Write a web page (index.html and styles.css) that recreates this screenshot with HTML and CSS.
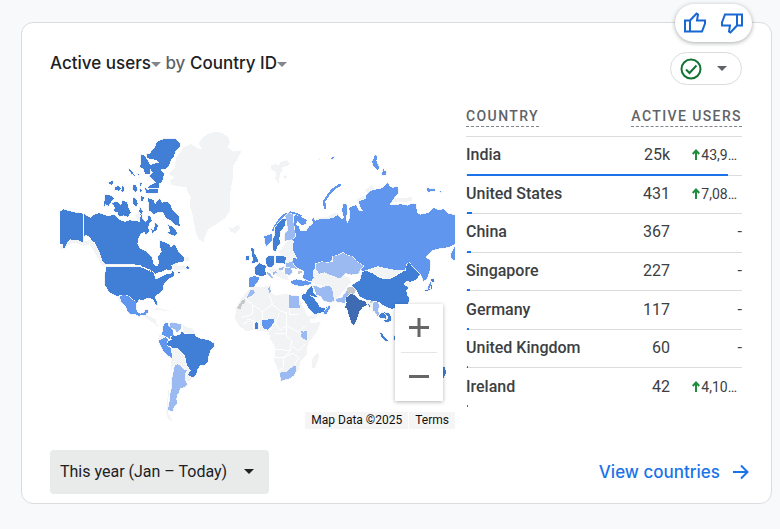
FILE: index.html
```html
<!DOCTYPE html>
<html lang="en">
<head>
<meta charset="utf-8">
<meta name="viewport" content="width=device-width, initial-scale=1">
<title>Active users by Country ID</title>
<link rel="stylesheet" href="styles.css">
</head>
<body>
<main class="card">
  <div class="feedback">
    <button type="button" aria-label="Helpful"><svg width="24" height="24" viewBox="0 0 24 24"><path d="M2 9.500h5v11H2zM7 9.500 13.500 2.500l1.500 1-1 6H22v3l-3 8H7"/></svg></button>
    <button type="button" aria-label="Not helpful"><svg class="down" width="24" height="24" viewBox="0 0 24 24"><path d="M2 9.500h5v11H2zM7 9.500 13.500 2.500l1.500 1-1 6H22v3l-3 8H7"/></svg></button>
  </div>
  <header class="head">
    <h2 class="title"><button type="button">Active users<i class="caret"></i></button> <span>by</span> <button type="button">Country ID<i class="caret"></i></button></h2>
    <button type="button" class="status" aria-label="Data quality">
      <svg width="22" height="22" viewBox="0 0 22 22"><circle cx="11" cy="11" r="9.500"/><path d="m6 11.500 3.500 3.500 7-7.500"/></svg>
      <i class="caret"></i>
    </button>
  </header>
  <div class="body">
    <div class="map">
      <svg class="world" viewBox="60 120 395 310" role="img" aria-label="World map of active users">
        <g transform="translate(150 120) scale(.33333)" class="none">
          <path d="M205 38l15 6 15 12 5 14-8 14 18 14 25-4-13 28-12 18-2 40-8 45v50l-15 23-30 20-20 12-10 20-5 20-15-10-10-30-7-40-8-30 2-25-14-30-43-7-5-13 12-10-17-10 20-20 3-30 17-20 5-10 25-10 15 13 18 2-13-15 13-20 22-13zM238 325l10 2 17-9 6 11-16 14-15-5zM363 139l14-4 10 6 3-12 20-5 10 8-8 10-16 1 2 12-8 10-4 28-10-14 2-20-14-8zM400 172l8-4 3 8-6 4zM386 400l30-40 20-4 10 26-4 35-28 15z"/>
        </g>
        <g transform="translate(40 120) scale(.33333)">
          <path class="shore" d="M62 388l20-14 20-10 28 10 22-5 22 36 18 34M410 435l-10 15 30-5 15 3M290 285l10 20M440 415l3 12"/>
          <path class="high" d="M60 278l10-7 10 3 20 6 29 4v86l-9-4-5-4-13 2-10-3-10 8-5 12-4 7-5-3 3-8-11-3z"/>
          <path class="high" d="M132 285l8 5 12 7 8-8 8-4 10-2 14 4 12 5 16-4 8 3 6 8 12 7 10 3 12-5 20 2 12 4 2-20-6-12 7-5 4 7v20l10 8 8-8-2-10 8 2 4 14-8 8-3 12 4 12-10 8-6-8-10 6-6 12-4 18 9 16 17 7 18 18 5 22 10 6 6-12-3-18 12-15-7-16 1-18 17 8 10 3 4 10 12-8 6 9 7 14 17 17-3 10-18 4-18 8 3 10-10 5-8-4-8 6-20 5-19 13-5-12-16-14-28-12H198l-10-8-10-30-6-12-7-15-11-8-5-10-12-6-5 6z"/>
          <path class="high" d="M352 68l20-8h35l15 15-3 8-13 14-4 14-10 12-4 14-10 12-18 3 12 12-5 22-9 8-2 12-31 2 1-6 12-6 10-6-12-10-7-10 9-10-8-12 5-12 24-6-12-8-13-1-12-4-2-14 10 3 5-10 8-8zM303 108l10 2 10 14 10 18-4 22h-14l-5-16-10-4 3-14zM315 206l6 6 32-3v12l-15 2-20-2zM300 192l5 1-3 10zM280 198l9 2 2 14-5 5-7-6zM300 206l6 10-5 2zM325 238l6 2 10 4 4 14 6-12 8-6 8 11 14-2 10 8 4 12 12 15 10 10 2 27-14-5-12-12-14-6-10-18-16-2-10 8-16-12zM384 318l10 4 12 10 5 12-8 6-20-8 8-6zM192 265l3-37 20 2 7 10-8 8-8 12-10-4zM216 252l14-4 12 12 6-15 14 6 2 12 8 18-8 12-14-4-14 3-2-12-14-4 6-10zM208 196l-3-5 12-5 4 3-6 8zM224 205l10-4 8 8-5 6-12-2zM248 198l6 15-8 6-2-5zM264 148l12 8 8 14-10-6zM292 165l6 1v6zM280 236l8 4 6 14-6 8-8-8zM304 232l8 2-2 10-8 2zM300 265l8 12-4 8-6-8zM345 312l9 6-4 14-8 6zM334 330l8 4-4 10zM440 441l9 3-3 5-8-1z"/>
        </g>
        <g transform="translate(40 250) scale(.33333)">
          <path class="none" d="M222 133l15 5 4 22-10-16zM312 197l16 3 20 12 1 14 14 6-12-1-20-16-22-12zM330 180l30-3 35 12-36-6zM428 228l14 7 18 5 3 14-34-4zM356 258l12-3 12 12-15 8-10 3zM398 300l16 1 20 18 6 20 14 20-4 14 10 12-14 12-6-12 2-24-22-12-22 2-6 20-6 60-2 60 6 10 8 16-13-6-6-20 4-50 8-60 4-60zM440 378l15 8-8 12-10-4z"/>
          <path class="border" d="M200 50h100l6 4 28 11 10 10 4 15 27-16 20-3 6-10"/>
          <path class="high" d="M200 53h98l10 4 25 12 10 10 4 14 28-16 18-2 4-8 5 4-2 12-12 4-8 10-8 8-4 8 2 8-10 10-12 8-4 6 5 10 3 13-4-1-6-10-4-8-18-2-10 6-12-2-6 8-4 4-6-4-6-10-10-4-14-4-15 2-20-8-12-8-4-10-6-8v-32zM414 69l6 1-2 4z"/>
          <path class="mid" d="M238 140l17-1 10 3 10 9 12 6 2 20 1 12 10 5 11-2 6-10h9l-2 9-7 3 2 6-10-3-12 4-14-6-12 1-8-10-6-14-12-12zM376 221l7 0 3 12 11 8 4 20-8 2-4 7-12-9-12-4 3-10v-12zM368 269l8-4 8 8-3 12 4 8 9 5 1 28-14-8-12-14-12-24 1-6z"/>
          <path class="low" d="M388 224l12-3 24 6-1 12-11 12-6-8-5-4-10-3zM404 350l8-4 10 4 10 12 9 1-5 10v22l6 12-8 8-14 2-4 14-5 8-2 10 2 16-9 8-4 14-14-4 6-30 2-26 4-12-1-22 5-20z"/>
          <path class="high" d="M400 262l20-4 5-11 8 9 30-2 4 9 14 6 24 4 16 10 1 9-12 14-5 16-2 15-8 11-14 1-10 12-2 15-11 9-15-8 9-12-8-12-6-14-2-18-18-17-6-6-14-1-8-6-8-2 1-12 12-4-2-10z"/>
        </g>
        <g transform="translate(220 230) scale(.33333)">
          <path class="none" d="M78 190l20-15 25-2 24-1 5 20 18 8 20-5 45 5 8 20 20 42 12 22 28-6-16 36-24 30-2 34-18 16-8 30-26 28-24 4-7-24-15-35 2-45-14-20-4-22-24-5-24-2-22 4-20-18-12-20 4-34 15-27zM294 370l4 10-12 35-8 3-4-8 4-22zM195 60l35 10-5 30-30-5zM145 120l25 0 30 15 8 20-20-5-30-15zM278 130l22-22 50 26 38 12 5 14-30 35-20 25-35-50-35-10zM262 262l20-4 28-12-28 24-15 2z"/>
          <path class="border" d="M75 208l22 18v30l-30 10M97 226l30 22 30-22-10-32M127 248v24M157 226l25 20 18 5v40l-20 12-14-20 12-30M208 198v58l30 0M200 290l35 20 20-20M165 315l30 0 20 20-5 30-45-5M200 291l0 25M210 365l-20 22h-28M190 387v28l-14 12M215 350l20 15 20-20M190 387l28-15 18 14-12 20M80 270l22 5 0 28M118 274v28M68 285l20-10M148 305l15-22"/>
          <path class="dis" d="M75 210l-10 5-14 23 12 2 2-12 10-6zM232 128l14-2 0 6-12 4z"/>
          <path class="low" d="M80 206l12-24 11 3 1 8-16 12zM145 176l5-4 2 14-2 9-4-8zM208 198l14 4 14 0 0 16 5 18h-33zM242 304l8 4 12-2 0 14-3 15-16-11 2-10zM180 431l10-3 12 0 12-12 12-8 3 18-8 14-16 10-12 2-10 3zM194 118l18-2 6 14-8 8-14-4zM198 103l28-8 36 8-2 10-14 8-20-2-28-6zM158 130l10-4 2 5-10 6zM142 130l6 2 12 14-4 1-14-12zM176 118l16-4-4 8-12 2zM280 172l8-2 12 8 22-8 12 4 4 14 4 26-8 6-20-4-14-16-10-2zM348 210l18-4 18-26 6 12-12 16-4 14-24-4z"/>
          <path class="mid" d="M88 146l14-5 16 5-6 14-12 14-12 0zM214 156l14-5 20 4 24-2 1 12-16 4-18 2-24-6zM127 274l14-2 20-3 1 10-8 12-11 11-12-3-4-10zM312 244l10-6 6-10 2 8-10 18-8 2z"/>
          <path class="high" d="M105 114l14-12 8 6 12 2-4 12 3 14-12 6-20-6zM138 89l8-9 16 1 1 22-8 12-12-2-4-10zM168 82l14-2 15 4-1 20-28-3zM94 58l8 1 0 14 10 14 2 12-20 4 6-12-5-16zM79 82l9-1-2 12-8 1zM105 282l7-4 2 21-9 1zM248 196l12-3 20 14 14 17 3 10 18 4-4 10-28 8-14-15-14-22-10-14zM262 184l12-14 6 10 0 12 12 12-14-2-20-8zM320 232l3 2-5 5z"/>
        </g>
        <g transform="translate(330 240) scale(.33333)">
          <path class="none" d="M100 82l40-10 15-8 15 10 50 4-4 18-36 22-30-3-28-16zM215 134l20-10 8 10-8 14zM100 184l36 8 20 10-14 10-24-8z"/>
          <path class="dis" d="M50 146l18-3 9 12-5 10-18 0zM118 184l16-2-2 12-12-2z"/>
          <path class="low" d="M128 192l14-4 6 14-4 8 4 20-5 2-8-14-6-2z"/>
          <path class="high" d="M102 85l10 12 16 6 22 15 30 3 38-22 3-18 4-6-2-16 14-6 10 7 8 16 10 10 10 6-4 13-14 18-14 5-15-1-7 10 14 8-6 10 2 12 7 12-4 16-13 8-14 4-24 2-20-8-16-12-14-3-24-4-20-10-8-18-15-16 24-14zM115 195l5 6-2 6zM146 230l10-10 12 9 0 10-16-2zM162 220l14 2 8 14-2 10-14 4-6-5 12-4-2-12zM148 278l10 8 8 12 8 8-6 2-14-16zM192 290l6 2v12h-6zM340 383l5 3 3 16-8 15zM302 122l8-3 2 8-8 3zM300 134l6-3-1 18-9 5-12 2 12-12z"/>
          <path class="top" d="M62 164l13 4 9 12 14 5 10 3 2 10-12 6-9 12-6 16-7 20-5 7-8-10-9-28-2-13-7-3 5-14-2-14z"/>
        </g>
        <g transform="translate(230 140) scale(.33333)">
          <path class="shore" d="M232 275l15-18 20-15 25-2 14-8 20-6M583 340l20-20 50-8 22-14M476 184l70-3M383 186l22-12M408 158l20-15"/>
          <path class="mid" d="M195 227l15 6 20 10-2 12-14 3-12-12-5 12 10 4 3 14 20 0 8-14 12-8-4-12 6-6 2 10 18-6 20 0 18-4 14-8 10 12 8-3-6-24 4-17 9-1 3 24-5 20 5 14 9-16-3-28 6-6 14-4 8 16 12 0-8-14-4-14 22-8 1-12 18-14 25-3 15-12 6-8 5 11 10 6 14-4 3 12-2 10-10 10-8 12-8 12 36-3 20 4 14-6 12 3 1 24 12 6 24-5 16-15 12 6 18-2 10 12 25 6v84l-20 11-26 4-24 5-20 21 14 12-2 28-8 26-10 6-8-20-12-12-14-13-8-12-10 6-4 18-34-1-25-5-22-5-25 8-20 6-20-10-10-16-14-5-20-4-16-3-18 8-6 16-22 0-22 8-2 14 2 12-8 12-12-4-12-8 4-20-20-9-12-12-4-24-10-12 4-22 12-8-14-12-2-18zM103 292l22-7 2 18-12 12-6 6-4-12zM57 58M304 56l8-3-2 7-6 0zM434 48l7 4-2 14 10 22-8 5-10-10-5-16 6-8zM460 90l2 4 7 4-2 9-12 1zM592 146l8 4 14 0 1 6-12 0-8 4-4-8zM630 157h3v3zM662 345l13-22v40l-10-2zM600 430l5-2-5 20-8 2z"/>
          <path class="novaya" d="M286 210l-4-22 14-22 14-16 23-14"/>
          <path class="coast" d="M128 276l8-16 12-18 14-14 20-8 14 3 18 8"/>
          <path class="low" d="M174 222l14 4 3 30 5 36-14 11-17 2-1-18 10-14-3-26-5-14zM258 375l16-6 20 2 14-2 1-16 20-6 10-6 12 8 16 4 12 14 21 14-10 10-4 12-22 4-18-5-16 16-30-10-16-8-16 4-10-12z"/>
          <path class="high" d="M158 238l9 3-2 18-15 20-2 20 2 14-8 8-4 15-8-2-2-34 6-10 0-24 14-16z"/>
          <path class="none" d="M262 61l8-4-2 7zM172 312l16-8 0 28 14 28-30-10z"/>
        </g>
      </svg>
      <div class="zoom">
        <button type="button" aria-label="Zoom in"><svg width="20" height="20" viewBox="0 0 20 20"><path d="M0 9.500h20M10 0v19"/></svg></button>
        <button type="button" aria-label="Zoom out"><svg width="20" height="20" viewBox="0 0 20 20"><path d="M0 9.500h20"/></svg></button>
      </div>
      <div class="credit"><span>Map Data ©2025</span><a href="#terms">Terms</a></div>
    </div>
    <table class="data">
      <thead><tr><th scope="col"><span>COUNTRY</span></th><th scope="col" colspan="2"><span>ACTIVE USERS</span></th></tr></thead>
      <tbody>
        <tr style="--bar:261px"><th scope="row">India</th><td class="count">25k</td><td class="up"><svg width="8" height="11" viewBox="0 0 8 11"><path d="M4 11V2M0.700 5 4 1.500 7.300 5"/></svg>43,9…</td></tr>
        <tr style="--bar:5px"><th scope="row">United States</th><td class="count">431</td><td class="up"><svg width="8" height="11" viewBox="0 0 8 11"><path d="M4 11V2M0.700 5 4 1.500 7.300 5"/></svg>7,08…</td></tr>
        <tr style="--bar:4px"><th scope="row">China</th><td class="count">367</td><td>-</td></tr>
        <tr style="--bar:3px"><th scope="row">Singapore</th><td class="count">227</td><td>-</td></tr>
        <tr style="--bar:2px"><th scope="row">Germany</th><td class="count">117</td><td>-</td></tr>
        <tr style="--bar:1px"><th scope="row">United Kingdom</th><td class="count">60</td><td>-</td></tr>
        <tr style="--bar:1px"><th scope="row">Ireland</th><td class="count">42</td><td class="up"><svg width="8" height="11" viewBox="0 0 8 11"><path d="M4 11V2M0.700 5 4 1.500 7.300 5"/></svg>4,10…</td></tr>
      </tbody>
    </table>
  </div>
  <footer class="foot">
    <button type="button" class="range">This year (Jan – Today)<i class="caret"></i></button>
    <a class="more" href="#countries">View countries <svg width="16" height="16" viewBox="0 0 16 16"><path d="M0 8h14M8 1.500 14.500 8 8 14.500"/></svg></a>
  </footer>
</main>
</body>
</html>
```
FILE: styles.css
```css
* { box-sizing: border-box; }
body {
  margin: 0;
  padding: 22px 8px 24px 21px;
  background: #f8f9fb;
  color: #3c4043;
  font-family: Roboto, "Liberation Sans", sans-serif;
}
button { padding: 0; border: 0; background: none; color: inherit; font: inherit; cursor: pointer; }
svg { display: block; fill: none; }
.card {
  position: relative;
  padding: 29px 29px 9px 28px;
  border: 1px solid #dadce0;
  border-radius: 12px;
  background: #fff;
}
.caret {
  display: inline-block;
  border: 5px solid transparent;
  border-top-color: currentColor;
  border-bottom: 0;
}
.feedback {
  position: absolute;
  top: -19px;
  right: 19px;
  display: flex;
  align-items: center;
  justify-content: space-between;
  width: 77px;
  height: 38px;
  padding: 0 8px;
  border-radius: 19px;
  background: #fff;
  box-shadow: 0 1px 4px rgba(60, 64, 67, .45);
}
.feedback path { stroke: #1967d2; stroke-width: 2; }
.feedback .down { transform: rotate(180deg); }
.head { display: flex; justify-content: space-between; align-items: flex-start; }
.title { margin: 0; color: #5f6368; font: 500 17px/22px Inter, "Liberation Sans", sans-serif; }
.title button { color: #202124; }
.title .caret { color: #80868b; vertical-align: 2px; }
.status {
  display: flex;
  align-items: center;
  justify-content: space-between;
  width: 72px;
  height: 33px;
  padding: 0 14px 0 9px;
  border: 1px solid #dadce0;
  border-radius: 17px;
  color: #5f6368;
}
.status circle, .status path { stroke: #137333; stroke-width: 2; }
.body {
  display: grid;
  grid-template-columns: minmax(0, 395fr) minmax(0, 276fr);
  gap: 11px;
  align-items: start;
  padding: 21px 0 21px 10px;
}
.map { position: relative; margin-top: 13px; }
.world { width: 100%; height: auto; shape-rendering: crispEdges; }
.none { fill: #f1f3f4; }
.low { fill: #9bbaf2; }
.mid { fill: #6096ee; }
.high { fill: #407fd5; }
.top { fill: #3f6bb2; }
.dis { fill: #c6c8ca; }
.border { stroke: #fff; stroke-width: 3; }
.high ~ .border, .none + .border { stroke: #fff; }
.shore { stroke: #f1f3f4; stroke-width: 12; }
.novaya { stroke: #6096ee; stroke-width: 7; }
.coast { stroke: #6096ee; stroke-width: 5; }
.low, .mid, .high, .top { stroke: #f1f3f4; stroke-width: 4; paint-order: stroke; }
.zoom {
  position: absolute;
  right: 12px;
  bottom: 28px;
  width: 48px;
  padding: 0 6px;
  background: #fff;
  box-shadow: 0 1px 4px rgba(0, 0, 0, .3);
}
.zoom button { display: grid; place-items: center; width: 100%; height: 48px; }
.zoom button + button { height: 49px; border-top: 1px solid #e6e6e6; }
.zoom path { stroke: #666; stroke-width: 3; }
.credit {
  position: absolute;
  right: 0;
  bottom: 0;
  display: flex;
  gap: 1px;
  color: #111;
  font-size: 12px;
  line-height: 17px;
}
.credit > * { padding: 0 6px; background: #f5f5f5; color: inherit; text-decoration: none; }
.data { width: 100%; height: 301px; border-collapse: collapse; table-layout: fixed; }
.data thead tr { height: 31px; background: linear-gradient(#dadce0, #dadce0) 0 100% / 100% 1px no-repeat; }
.data th, .data td { padding: 0; text-align: right; font-weight: 400; }
.data th:first-child { width: 140px; text-align: left; }
.data thead th { vertical-align: top; color: #5f6368; font-size: 14px; font-weight: 500; line-height: 20px; letter-spacing: .1em; white-space: nowrap; }
.data thead span { display: inline-block; border-bottom: 1px dashed #80868b; }
.data tbody tr {
  background:
    linear-gradient(#1a73e8, #1a73e8) 1px 100% / var(--bar) 2px no-repeat,
    linear-gradient(#dadce0, #dadce0) 0 100% / 100% 1px no-repeat;
}
.data tbody tr:last-child { background: linear-gradient(#1a73e8, #1a73e8) 1px 100% / var(--bar) 2px no-repeat; }
.data tbody th, .data tbody td { padding-bottom: 2px; font-size: 16px; line-height: 20px; }
.data tbody th { font-weight: 500; }
.data tbody .count { padding-right: 4px; }
.data tbody .up { padding-right: 5px; font-size: 14px; }
.up svg { display: inline-block; margin-right: 1px; }
.up path { stroke: #1e8e3e; stroke-width: 2; }
.foot { display: flex; justify-content: space-between; align-items: center; }
.range {
  display: flex;
  align-items: center;
  gap: 17px;
  height: 44px;
  padding: 0 15px 1px 10px;
  border-radius: 4px;
  background: #e9ebea;
  color: #202124;
  font-size: 16px;
}
.more {
  display: flex;
  align-items: center;
  gap: 13px;
  margin-right: -7px;
  color: #1a73e8;
  font: 500 17px/24px Inter, "Liberation Sans", sans-serif;
  text-decoration: none;
}
.more path { stroke: #1a73e8; stroke-width: 2; }
```
